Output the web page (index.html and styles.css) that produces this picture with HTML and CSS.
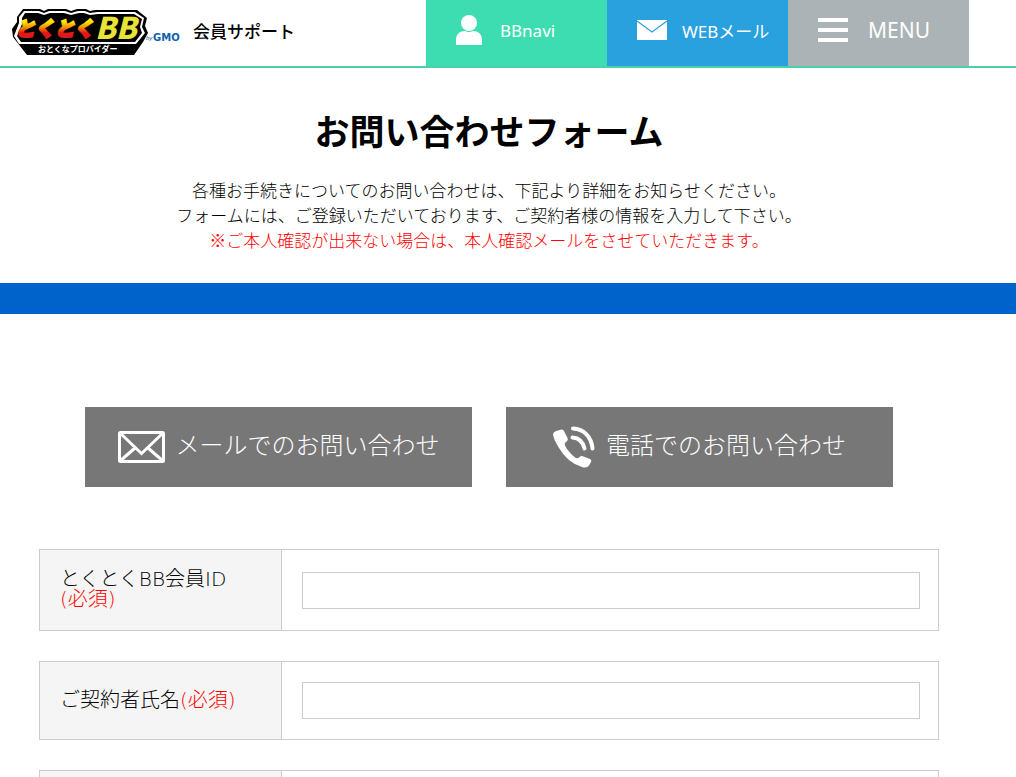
FILE: index.html
```html
<!DOCTYPE html>
<html lang="ja">
<head>
<meta charset="utf-8">
<meta name="viewport" content="width=device-width, initial-scale=1">
<title>お問い合わせフォーム</title>
<link rel="stylesheet" href="styles.css">
</head>
<body>
<header class="header">
  <a class="brand" href="#">
    <svg class="logo" width="172" height="50" viewBox="0 0 172 50" role="img" aria-label="とくとくBB by GMO">
      <defs>
        <linearGradient id="fire" x1="0" y1="0" x2="0" y2="1">
          <stop offset="0.3" stop-color="#ffe800"/>
          <stop offset="0.5" stop-color="#f58a0c"/>
          <stop offset="0.68" stop-color="#e01818"/>
        </linearGradient>
      </defs>
      <path d="M12 3 H29 L33 5 L37 3 H55 L60 5 L66 3 H75 L79 5 L84 4 H126 L136 12 L134 20 L137 27 L132 36 L123 49 H16 L2 31 L1 23 L6 16 V11 Z" fill="#000"/>
      <path d="M13 5 H28 L33 7 L38 5 H54 L60 7 L67 5 H74 L79 7 L86 6 H124 L133 12 L131 21 L134 27 L125 38 H8 L3 30 L8 17 V11 Z" fill="#fff"/>
      <path d="M14 7 H27 L33 9 L39 7 H53 L60 9 L68 7 H73 L79 9 L87 8 H123 L131 13 L129 21 L131 27 L124 36 H10 L6 30 L11 18 V12 Z" fill="#000"/>
      <text class="logo-kana" x="4" y="30" fill="url(#fire)" stroke="url(#fire)">とくとく</text>
      <text class="logo-bb" x="84" y="33">BB</text>
      <text class="logo-sub" x="27" y="46">おとくなプロバイダー</text>
      <text class="logo-by" x="135" y="34">by</text>
      <text class="logo-gmo" x="142" y="35">GMO</text>
    </svg>
    <span class="brand-name">会員サポート</span>
  </a>
  <nav class="nav">
    <a class="tile tile-navi" href="#">
      <svg width="26" height="30" viewBox="0 0 26 30" fill="#fff" aria-hidden="true"><circle cx="13" cy="8" r="8"/><path d="M0 30v-5c0-6 4-9 9-9q4 2 8 0c5 0 9 3 9 9v5z"/></svg>
      <span class="tile-text">BBnavi</span>
    </a>
    <a class="tile tile-mail" href="#">
      <svg width="30" height="20" viewBox="0 0 30 20" aria-hidden="true"><path d="M0 0h30v20H0z" fill="#fff"/><path d="M0 1l15 11L30 1" fill="none" stroke="#29a1de" stroke-width="1.2"/></svg>
      <span class="tile-text">WEBメール</span>
    </a>
    <button class="tile tile-menu" type="button">
      <svg width="30" height="24" viewBox="0 0 30 24" fill="#fff" aria-hidden="true"><path d="M0 0h30v4H0zM0 10h30v4H0zM0 20h30v4H0z"/></svg>
      <span class="tile-text">MENU</span>
    </button>
  </nav>
</header>
<main>
  <section class="intro">
    <h1 class="title">お問い合わせフォーム</h1>
    <p class="lead">各種お手続きについてのお問い合わせは、下記より詳細をお知らせください。<br>フォームには、ご登録いただいております、ご契約者様の情報を入力して下さい。<br><span class="red">※ご本人確認が出来ない場合は、本人確認メールをさせていただきます。</span></p>
  </section>
  <div class="band"></div>
  <div class="content">
    <div class="choices">
      <a class="choice" href="#">
        <svg width="47" height="32" viewBox="0 0 47 32" fill="none" stroke="#fff" stroke-width="3" aria-hidden="true"><rect x="1.5" y="1.5" width="44" height="29" rx="1"/><path d="M2 2l21.500 20.500L45 2M2 30l15-13M45 30L30 17"/></svg>
        <span class="choice-text">メールでのお問い合わせ</span>
      </a>
      <a class="choice" href="#">
        <svg width="42" height="42" viewBox="0 0 42 42" aria-hidden="true"><path d="M8.500 3.500Q10 3 11 5L14.500 12Q15.500 14 13.500 15.500L12 17Q11 19 14 23Q18 28.500 22 31.500Q24 33 26 31.500L27 30.500Q28.500 29.500 30.500 30.500L37 33Q39 34 38 36L36 39.500Q34 42.500 29 41Q15 37 6 22Q0 12 0 8Q1 5 5 4.500Z" fill="#fff"/><path d="M19.500 11.500C26 12 30 16 31.500 22.500M20 2.500C31 3 38.500 11 39.500 22.500" fill="none" stroke="#fff" stroke-width="4" stroke-linecap="round"/></svg>
        <span class="choice-text">電話でのお問い合わせ</span>
      </a>
    </div>
    <form class="form">
      <table class="field">
        <tr>
          <th class="field-head"><label for="member-id">とくとくBB会員ID<br><span class="red">(必須)</span></label></th>
          <td class="field-body"><input class="input" id="member-id" type="text"></td>
        </tr>
      </table>
      <table class="field">
        <tr>
          <th class="field-head"><label for="member-name">ご契約者氏名<span class="red">(必須)</span></label></th>
          <td class="field-body"><input class="input" id="member-name" type="text"></td>
        </tr>
      </table>
      <table class="field">
        <tr>
          <th class="field-head"></th>
          <td class="field-body"></td>
        </tr>
      </table>
    </form>
  </div>
</main>
</body>
</html>
```
FILE: styles.css
```css
* { box-sizing: border-box; }

body {
  margin: 0;
  background: #fff;
  color: #000;
  font-family: "Noto Sans CJK JP", sans-serif;
  font-weight: 300;
}

a { color: inherit; text-decoration: none; }
svg { flex: none; display: block; }
.red { color: #f00; }

.header {
  display: flex;
  justify-content: space-between;
  padding: 0 47px 0 11px;
  border-bottom: 2px solid #4bd1aa;
}

.brand {
  display: flex;
  align-items: center;
  gap: 10px;
  height: 62px;
}

.brand-name { font-size: 17px; font-weight: 500; line-height: 24px; }

.logo-kana { font-size: 20px; font-weight: 900; font-style: italic; stroke-width: 2; }
.logo-bb { font-size: 30px; font-weight: 900; font-style: italic; fill: #e8e337; }
.logo-sub { font-size: 8px; font-weight: 700; fill: #fff; }
.logo-by { font: italic 6px "Liberation Sans", sans-serif; fill: #0b62ac; }
.logo-gmo { font: bold 10px "DejaVu Sans", sans-serif; fill: #0b62ac; }

.nav { display: flex; }

.tile {
  display: flex;
  align-items: center;
  width: 181px;
  height: 66px;
  padding: 0 0 6px 30px;
  border: 0;
  color: #fff;
  font-family: "Noto Sans", "Noto Sans CJK JP", sans-serif;
  font-size: 17px;
  font-weight: 400;
}

.tile-navi { gap: 18px; background: #3eddb1; }
.tile-mail { gap: 15px; background: #29a1de; }
.tile-menu { gap: 20px; background: #abb3b6; font-size: 21px; }

.intro {
  padding: 37px 38px 31px 0;
  text-align: center;
}

.title {
  margin: 0 0 22px;
  font-size: 35px;
  font-weight: 700;
  line-height: 50px;
}

.lead { margin: 0; font-size: 17px; line-height: 25px; }

.band { height: 31px; background: #0063cb; }

.content { padding: 93px 77px 0 39px; }

.choices {
  display: flex;
  justify-content: center;
  gap: 34px;
  margin-bottom: 62px;
  padding: 0 46px;
}

.choice {
  display: flex;
  flex: 1;
  align-items: center;
  justify-content: center;
  gap: 11px;
  height: 80px;
  background: #777;
  color: #fff;
  font-size: 24px;
}

.choice-text { padding-bottom: 6px; line-height: 32px; }

.field {
  width: 100%;
  margin-bottom: 30px;
  border: 1px solid #ccc;
  border-spacing: 0;
  table-layout: fixed;
}

.field-head {
  width: 242px;
  height: 77px;
  padding: 19px 20px 21px;
  border-right: 1px solid #ccc;
  background: #f5f5f5;
  font-family: "DejaVu Sans", "Noto Sans CJK JP", sans-serif;
  font-size: 20px;
  font-weight: 300;
  line-height: 20px;
  text-align: left;
}

.field-body { padding: 20px 18px 20px 20px; }

.input {
  display: block;
  width: 100%;
  height: 37px;
  padding: 0 8px;
  border: 1px solid #ccc;
  background: #fff;
  font: inherit;
}
```
